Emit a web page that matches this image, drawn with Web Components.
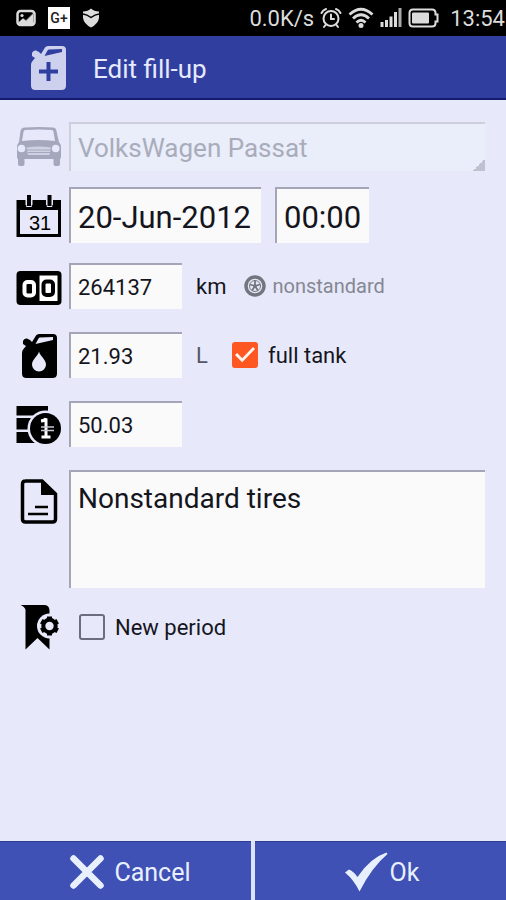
<!DOCTYPE html>
<html lang="en">
<head>
<meta charset="utf-8">
<meta name="viewport" content="width=device-width, initial-scale=1">
<title>Edit fill-up</title>
<style>
  html, body { margin: 0; }
  body {
    font-family: Roboto, "Noto Sans", sans-serif;
    font-size: 22px;
    color: #15151d;
    --page: #e7e9fa;
    --field: #fafafa;
    --edge: #a4a5b6;
    --primary: #3f51b5;
    --primary-dark: #303f9f;
    --accent: #ff5722;
    background: var(--page);
  }
</style>
</head>
<body>
<fillup-screen></fillup-screen>
<script>
const CAN = `
  <path fill="currentColor" fill-rule="evenodd" d="M7 9 q1-3 4-2.500 l3 1.500 l2 2 L20 3.500 Q21 2 23 2 H37 Q41 2 41 6 V41.500 Q41 46 36.500 46 H10.500 Q6 46 6 41.500 V21 Q6 18.500 7.500 17 L10 14 L7 12 Z M19.500 12 L37 8 V5 L24 5.500 Q23 5.500 22.500 6.500 Z"/>`;
const ICONS = {
  canPlus: [46, 46, CAN + `<path d="M23.500 18 V37 M14 27.500 H33" stroke="var(--primary-dark)" stroke-width="4"/>`],
  can: [46, 46, CAN + `<path fill="var(--page)" d="M23 19.500 C24 24 30 27.500 30 32.500 A7 7 0 0 1 16 32.500 C16 27.500 22 24 23 19.500Z"/>`],
  car: [46, 46, `
    <path fill="currentColor" fill-rule="evenodd" d="M4.500 7 Q5 3.500 9 3.500 Q23 2.500 37 3.500 Q40 3.500 40.500 7 L43 18 Q45 20 45 24 V33 Q45 35 44 35 V40 Q44 42 42 42 H39.500 Q37.500 42 37.500 40 V35 H8.500 V40 Q8.500 42 6.500 42 H4 Q2 42 2 40 V35 Q1 35 1 33 V24 Q1 20 3 18 Z M7.500 8 L6 17 Q23 15 39 17 L37.500 8 Q37.500 6 35.500 6 Q23 5 9.500 6 Q7.500 6 7.500 8Z"/>
    <path d="M10.500 23.500 Q23 21.500 35 23.500 L33.500 31 H12 Z" fill="#ced1e2"/>
    <path d="M11 26 H35 M12 28.500 H34" stroke="currentColor" stroke-width="1"/>
    <circle cx="5.500" cy="24.500" r="3.800" fill="var(--page)"/><circle cx="39.700" cy="24.500" r="3.800" fill="var(--page)"/>`],
  calendar: [46, 46, `
    <path fill="currentColor" fill-rule="evenodd" d="M0.500 8 H45 V45 H0.500Z M4 18 V42 H42 V18Z"/>
    <path d="M13 4 V13 M33.500 4 V13" stroke="var(--page)" stroke-width="7"/>
    <path d="M13 3 V15 M33.500 3 V15" stroke="var(--page)" stroke-width="5.500"/>
    <path d="M13 3 V14 M33.500 3 V14" stroke="currentColor" stroke-width="4"/>
    <text x="24" y="38" font-family="Liberation Sans, Arial, sans-serif" font-size="20" text-anchor="middle" fill="currentColor">31</text>`],
  odometer: [46, 46, `
    <rect x="0.500" y="8" width="45" height="34" rx="4" fill="currentColor"/>
    <rect x="8.500" y="19" width="9.500" height="13.500" rx="3" fill="none" stroke="#fff" stroke-width="4"/>
    <rect x="23.500" y="12.500" width="18" height="25.500" fill="#fff"/>
    <rect x="27.500" y="18.500" width="9.500" height="13.500" rx="3" fill="none" stroke="currentColor" stroke-width="4"/>`],
  coins: [46, 46, `
    <path fill="currentColor" d="M0.500 5 H32 V14.500 H0.500Z M0.500 17 H30 V28.500 H0.500Z M0.500 31 H30 V42 H0.500Z"/>
    <circle cx="29.500" cy="27.500" r="18" fill="var(--page)"/><circle cx="29.500" cy="27.500" r="15.500" fill="currentColor"/>
    <path d="M25 20 Q29 19.500 30 17.500 V35.500 M25.500 36 H34.500" fill="none" stroke="#fff" stroke-width="3"/>
    <path d="M25 26 H38 M25 29.500 H38" stroke="#c8c8d0" stroke-width="1.500"/>`],
  note: [46, 46, `
    <path d="M9 3 H26 L39.500 16 V41 Q39.500 44 36.500 44 H9.500 Q6.500 44 6.500 41 V6 Q6.500 3 9.500 3Z" fill="none" stroke="currentColor" stroke-width="3.500"/>
    <path d="M25 2 V17 H40Z" fill="currentColor"/>
    <path d="M19 29 H32 M12 36 H32" stroke="currentColor" stroke-width="2.500"/>`],
  bookmark: [46, 46, `
    <path fill="currentColor" d="M4.500 1 H28 Q33 1 33.500 6 V45.500 L21.500 34 L9.500 45.500 V6 Q9 3 4.500 1Z"/>
    <circle cx="33.500" cy="22" r="12.500" fill="var(--page)"/>
    <circle cx="33.500" cy="22" r="6.200" fill="none" stroke="currentColor" stroke-width="4"/>
    <path stroke="currentColor" stroke-width="5" d="M33.500 12.500 V16 M33.500 28 V31.500 M25.300 17.200 L28.500 19 M38.500 25 L41.700 26.800 M25.300 26.800 L28.500 25 M38.500 19 L41.700 17.200"/>`],
  tire: [22, 22, `
    <circle cx="11" cy="11" r="9" fill="none" stroke="currentColor" stroke-width="3.500"/>
    <circle cx="11" cy="11" r="5.500" fill="none" stroke="currentColor" stroke-width="1"/>
    <path d="M11 11 V5.500 M11 11 L6 9.500 M11 11 L16 9.500 M11 11 L8 15.500 M11 11 L14 15.500" stroke="currentColor" stroke-width="1.800"/>
    <circle cx="11" cy="11" r="1.800" fill="currentColor"/>`],
  cancel: [50, 36, `<path d="M11.500 4.500 L38.500 31.500 M38.500 4.500 L11.500 31.500" stroke="currentColor" stroke-width="6.500" stroke-linecap="round"/>`],
  ok: [44, 40, `<path d="M1 20.500 L5 17.500 Q10 19.500 13.500 25 Q26 6 42.500 0.500 L43.500 2 Q28 15 15.500 39.500 Q10 28 1 20.500Z" fill="currentColor"/>`],
  picture: [20, 18, `
    <rect x="1.500" y="2" width="17" height="14" rx="3" fill="none" stroke="currentColor" stroke-width="2.500"/>
    <circle cx="6" cy="6.500" r="1.600" fill="currentColor"/><path d="M3 15 V13 L7 9 L10 11 L17 4 V15Z" fill="#777"/>
    <path d="M3 15 V13 L7 9.500 L10 12 L17 5 V15Z" fill="currentColor"/>`],
  gplus: [22, 22, `<rect width="22" height="22" fill="#fff"/><text x="11" y="16" text-anchor="middle" font-family="Roboto, sans-serif" font-weight="500" font-size="14" fill="#222">G+</text>`],
  shield: [18, 20, `<path d="M1 3.500 Q6 3.500 9 0.500 Q12 3.500 17 3.500 V10 Q16 16 9 19.500 Q2 16 1 10Z" fill="currentColor"/><path d="M1 6 Q5 6.500 9 9.500 Q13 6.500 17 6" fill="none" stroke="#000" stroke-width="1.500"/>`],
  alarm: [22, 22, `
    <g fill="none" stroke="currentColor" stroke-width="2" stroke-linecap="round"><circle cx="11" cy="11.500" r="7.500"/>
    <path d="M11 7.500 V12 H14 M1.500 6 Q3 3 6 2 M20.500 6 Q19 3 16 2 M5.500 18 L4 20 M16.500 18 L18 20"/></g>`],
  wifi: [26, 22, `
    <g fill="none" stroke="currentColor" stroke-width="2.800"><path d="M1.500 7.500 Q13 -3 24.500 7.500 M5 11.500 Q13 4 21 11.500 M8.500 15.500 Q13 11 17.500 15.500"/></g><circle cx="13" cy="18.500" r="2.500" fill="currentColor"/>`],
  signal: [22, 22, `<path d="M2 15 V20 M6.500 13 V20 M11 9.500 V20 M15.500 5 V20" stroke="currentColor" stroke-width="3"/><path d="M20 1 V20" stroke="#aaa" stroke-width="3"/>`],
  battery: [32, 20, `
    <path d="M5 1.500 H24 Q27.500 1.500 27.500 5 V6.500 H29.500 V13.500 H27.500 V15 Q27.500 18.500 24 18.500 H5 Q1.500 18.500 1.500 15 V5 Q1.500 1.500 5 1.500Z" fill="none" stroke="currentColor" stroke-width="2"/>
    <rect x="4" y="4.500" width="17" height="11" rx="1" fill="currentColor"/>`]
};

class FormElement extends HTMLElement {
  constructor() {
    super();
    this.attachShadow({ mode: "open" });
  }
  connectedCallback() {
    const t = document.createElement("template");
    t.innerHTML = `<style>* { box-sizing: border-box; }</style>` + this.render();
    this.shadowRoot.replaceChildren(t.content.cloneNode(true));
  }
  attr(name) { return this.getAttribute(name) || ""; }
}

customElements.define("app-icon", class extends FormElement {
  render() {
    const [w, h, body] = ICONS[this.attr("name")];
    return `<style>:host { display: block; flex: none; } svg { display: block; }</style>
      <svg width="${w}" height="${h}" viewBox="0 0 ${w} ${h}" aria-hidden="true">${body}</svg>`;
  }
});

customElements.define("status-bar", class extends FormElement {
  render() {
    return `<style>
        :host { display: flex; align-items: center; justify-content: space-between; height: 36px; padding: 0 1px 0 16px; background: #000; color: #dcdcdc; font-size: 22px; }
        div { display: flex; align-items: center; }
        .notices { gap: 12px; }
        .system { gap: 6px; }
        time { padding-left: 4px; }
      </style>
      <div class="notices"><app-icon name="picture"></app-icon><app-icon name="gplus"></app-icon><app-icon name="shield"></app-icon></div>
      <div class="system"><span>0.0K/s</span><app-icon name="alarm"></app-icon><app-icon name="wifi"></app-icon><app-icon name="signal"></app-icon><app-icon name="battery"></app-icon><time>13:54</time></div>`;
  }
});

customElements.define("title-bar", class extends FormElement {
  render() {
    return `<style>
        :host { display: flex; align-items: center; gap: 22px; height: 64px; padding-left: 25px; background: var(--primary-dark); border-bottom: 2px solid #131c6e; color: #e6eafc; }
        app-icon { color: #cdd1ee; }
        h1 { margin: 0; padding-top: 4px; font-size: 26px; font-weight: 400; }
      </style>
      <app-icon name="canPlus"></app-icon><h1><slot></slot></h1>`;
  }
});

customElements.define("form-row", class extends FormElement {
  render() {
    return `<style>
        :host { display: grid; grid-template-columns: 46px 1fr; column-gap: 7px; align-items: center; }
        :host([spaced]) { padding: 4px 0 3px; }
        :host([tall]) { align-items: start; padding-top: 4px; }
        :host([tall]) app-icon { padding-top: 8px; }
        :host([muted]) app-icon { color: #a5a8bc; }
        app-icon { color: #000; }
        div { display: flex; align-items: center; min-width: 0; }
      </style>
      <app-icon name="${this.attr("icon")}"></app-icon><div><slot></slot></div>`;
  }
});

customElements.define("text-field", class extends FormElement {
  render() {
    return `<style>
        :host { display: block; width: 113px; }
        :host([kind="date"]) { width: 192px; margin-right: 14px; }
        :host([kind="time"]) { width: 94px; }
        input { display: block; width: 100%; height: 46px; margin: 0; padding: 0 0 0 7px; border: 0 solid var(--edge); border-width: 2px 0 0 2px; border-radius: 0; background: var(--field); color: inherit; font: inherit; outline: none; }
        :host([kind]) input { height: 56px; padding-top: 3px; font-size: 31px; }
      </style>
      <input type="text" aria-label="${this.attr("label")}" value="${this.attr("value")}">`;
  }
});

customElements.define("select-field", class extends FormElement {
  render() {
    return `<style>
        :host { display: block; flex: 1; }
        select { appearance: none; display: block; width: 100%; height: 49px; margin: 0; padding: 0 12px 0 7px; border: 0 solid #cdcfde; border-width: 2px 0 0 2px; border-radius: 0;
          background: linear-gradient(135deg, transparent 50%, #bfc1d2 50%) right bottom / 12px 12px no-repeat, #eaedfa; color: #a9acba; font: inherit; font-size: 26px; opacity: 1; }
      </style>
      <select aria-label="${this.attr("label")}" disabled><option>${this.attr("value")}</option></select>`;
  }
});

customElements.define("note-field", class extends FormElement {
  render() {
    return `<style>
        :host { display: block; flex: 1; }
        textarea { display: block; width: 100%; height: 118px; margin: 0; padding: 12px 7px; border: 0 solid var(--edge); border-width: 2px 0 0 2px; border-radius: 0; background: var(--field); color: inherit; font: inherit; font-size: 28px; line-height: 30px; resize: none; outline: none; }
      </style>
      <textarea aria-label="${this.attr("label")}">${this.attr("value")}</textarea>`;
  }
});

customElements.define("unit-label", class extends FormElement {
  render() {
    return `<style>:host { display: block; min-width: 26px; margin-left: 14px; } :host([muted]) { color: #555766; }</style><slot></slot>`;
  }
});

customElements.define("tire-button", class extends FormElement {
  render() {
    return `<style>
        :host { display: block; padding-left: 18px; }
        button { display: flex; align-items: center; gap: 6px; padding: 0; border: 0; background: none; color: #858792; font: inherit; font-size: 20px; }
        app-icon { color: #74767f; }
      </style>
      <button type="button"><app-icon name="tire"></app-icon><slot></slot></button>`;
  }
});

customElements.define("check-field", class extends FormElement {
  render() {
    return `<style>
        :host { display: block; padding-left: 10px; }
        label { display: flex; align-items: center; gap: 10px; }
        input { appearance: none; display: grid; place-items: center; width: 26px; height: 26px; margin: 0; border: 2px solid #6c6d7e; border-radius: 3px; background: transparent; }
        input:checked { border-color: var(--accent); background: var(--accent); }
        input:checked::before { content: ""; width: 20px; height: 16px; background: #fff5f0; clip-path: polygon(0 50%, 11% 38%, 36% 70%, 90% 0, 100% 13%, 36% 96%); }
      </style>
      <label><input type="checkbox" ${this.hasAttribute("checked") ? "checked" : ""}><slot></slot></label>`;
  }
});

customElements.define("action-button", class extends FormElement {
  render() {
    return `<style>
        :host { display: block; flex: 1; }
        button { display: flex; align-items: center; justify-content: center; gap: 2px; width: 100%; height: 59px; padding: 2px 0 0 2px; border: 0; border-top: 1px solid #2f3d94; background: var(--primary); color: #e9f0fd; font: inherit; font-size: 25px; }
      </style>
      <button type="button"><app-icon name="${this.attr("icon")}"></app-icon><slot></slot></button>`;
  }
});

customElements.define("fillup-screen", class extends FormElement {
  render() {
    return `<style>
        :host { display: flex; flex-direction: column; min-height: 100vh; background: var(--page); }
        main { flex: 1; display: flex; flex-direction: column; gap: 16px; padding: 22px 21px 22px 16px; }
        footer { display: flex; gap: 4px; background: #dbe3fa; }
      </style>
      <status-bar></status-bar>
      <title-bar>Edit fill-up</title-bar>
      <main>
        <form-row icon="car" muted><select-field label="Vehicle" value="VolksWagen Passat"></select-field></form-row>
        <form-row icon="calendar"><text-field kind="date" label="Date" value="20-Jun-2012"></text-field><text-field kind="time" label="Time" value="00:00"></text-field></form-row>
        <form-row icon="odometer" spaced><text-field label="Odometer" value="264137"></text-field><unit-label>km</unit-label><tire-button>nonstandard</tire-button></form-row>
        <form-row icon="can" spaced><text-field label="Volume" value="21.93"></text-field><unit-label muted>L</unit-label><check-field checked>full tank</check-field></form-row>
        <form-row icon="coins" spaced><text-field label="Price" value="50.03"></text-field></form-row>
        <form-row icon="note" tall><note-field label="Notes" value="Nonstandard tires"></note-field></form-row>
        <form-row icon="bookmark"><check-field>New period</check-field></form-row>
      </main>
      <footer>
        <action-button icon="cancel">Cancel</action-button>
        <action-button icon="ok">Ok</action-button>
      </footer>`;
  }
});
</script>
</body>
</html>
